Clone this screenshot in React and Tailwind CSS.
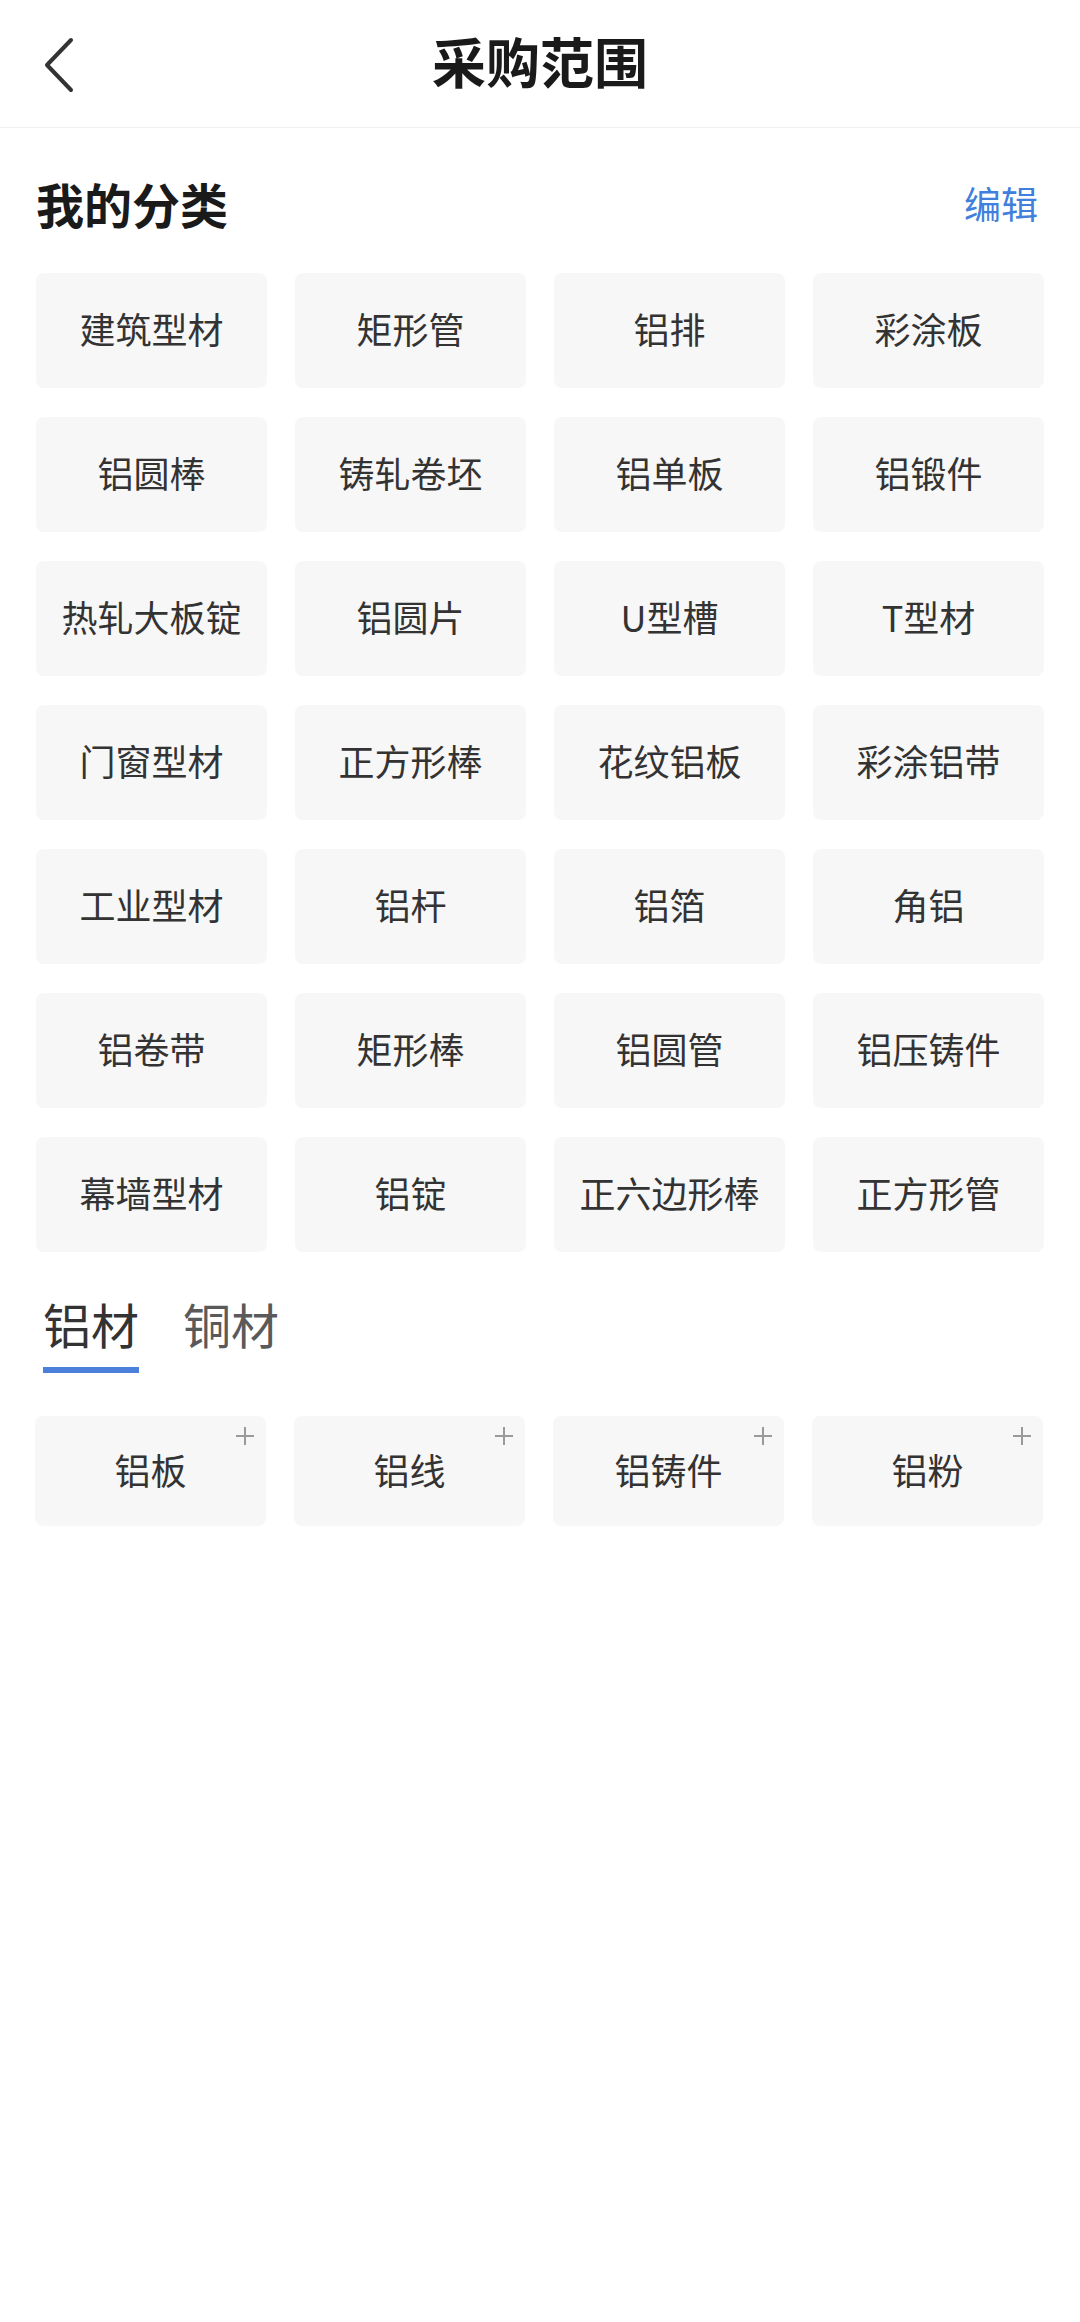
import { useState } from 'react'

const MY_CATEGORIES = [
  '建筑型材', '矩形管', '铝排', '彩涂板',
  '铝圆棒', '铸轧卷坯', '铝单板', '铝锻件',
  '热轧大板锭', '铝圆片', 'U型槽', 'T型材',
  '门窗型材', '正方形棒', '花纹铝板', '彩涂铝带',
  '工业型材', '铝杆', '铝箔', '角铝',
  '铝卷带', '矩形棒', '铝圆管', '铝压铸件',
  '幕墙型材', '铝锭', '正六边形棒', '正方形管',
]

const TABS = [
  { id: 'al', label: '铝材', items: ['铝板', '铝线', '铝铸件', '铝粉'] },
  { id: 'cu', label: '铜材', items: ['铜板', '铜线', '铜管', '铜棒'] },
]

function BackIcon() {
  return (
    <svg width="40" height="60" viewBox="0 0 40 60" fill="none">
      <path d="M33 6 L9 31 L33 56" stroke="#333333" strokeWidth="4" strokeLinecap="round" strokeLinejoin="round" />
    </svg>
  )
}

function PlusIcon() {
  return (
    <svg width="20" height="20" viewBox="0 0 20 20" fill="none">
      <path d="M10 1 V19 M1 10 H19" stroke="#9a9a9a" strokeWidth="2" />
    </svg>
  )
}

export default function App() {
  const [tab, setTab] = useState('al')
  const current = TABS.find(t => t.id === tab)

  return (
    <div className="w-[1080px] min-h-[2322px] bg-white" style={{ fontFamily: '"Noto Sans CJK SC", "Noto Sans", sans-serif' }}>
      <header className="h-[128px] grid grid-cols-[1fr_auto_1fr] items-center border-b border-[#f0f0f0]">
        <button type="button" className="justify-self-start ml-[38px]">
          <BackIcon />
        </button>
        <h1 className="text-[54px] leading-none font-bold text-[#1a1a1a] pb-[6px]">采购范围</h1>
        <div />
      </header>

      <section className="px-[36px]">
        <div className="pt-[51px] flex items-center justify-between">
          <h2 className="text-[48px] leading-[48px] font-bold text-[#1a1a1a]">我的分类</h2>
          <button type="button" className="text-[37px] leading-[48px] text-[#4080dc] mr-[6px]">编辑</button>
        </div>

        <div className="mt-[46px] grid grid-cols-4 gap-x-[28px] gap-y-[29px]">
          {MY_CATEGORIES.map(name => (
            <div key={name} className="h-[115px] pb-[5px] rounded-[8px] bg-[#f7f7f7] flex items-center justify-center text-[36px] text-[#333333]">
              {name}
            </div>
          ))}
        </div>

        <div className="mt-[43px] flex gap-[44px] ml-[7px]">
          {TABS.map(t => (
            <button
              key={t.id}
              type="button"
              onClick={() => setTab(t.id)}
              className="flex flex-col items-stretch"
            >
              <span className={`text-[48px] leading-[56px] pb-[2px] ${tab === t.id ? 'text-[#333333]' : 'text-[#5a5a5a]'}`}>{t.label}</span>
              <span className={`mt-[14px] h-[6px] ${tab === t.id ? 'bg-[#4a80dc]' : 'bg-transparent'}`} />
            </button>
          ))}
        </div>

        <div className="mt-[43px] grid grid-cols-4 gap-x-[28px] -ml-[1px] mr-[1px]">
          {current.items.map(name => (
            <div key={name} className="relative h-[110px] pb-[4px] rounded-[8px] bg-[#f7f7f7] flex items-center justify-center text-[36px] text-[#333333]">
              {name}
              <span className="absolute top-[10px] right-[11px] flex">
                <PlusIcon />
              </span>
            </div>
          ))}
        </div>
      </section>
    </div>
  )
}
